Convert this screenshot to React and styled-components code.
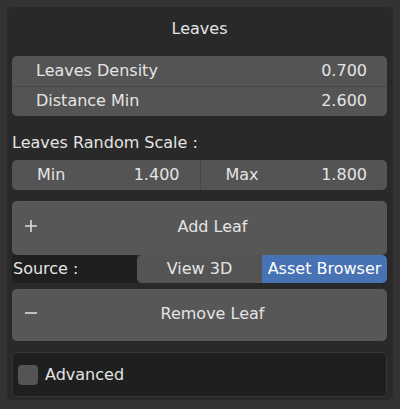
import React from "react";
import styled, { createGlobalStyle } from "styled-components";

const GlobalStyle = createGlobalStyle`
  html, body {
    margin: 0;
    padding: 0;
    background: #333333;
  }
  body {
    font-family: "DejaVu Sans", "Liberation Sans", sans-serif;
    color: #e4e4e4;
    font-size: 16px;
  }
`;

const Panel = styled.div`
  margin: 7px 0 0 7px;
  width: 386px;
  height: 393px;
  box-sizing: border-box;
  padding: 0 6px 0 5px;
  background: #292929;
  border-radius: 5px;
  display: flex;
  flex-direction: column;
`;

const Title = styled.div`
  height: 42px;
  display: flex;
  align-items: center;
  justify-content: center;
`;

const PropBox = styled.div`
  margin-top: 7px;
  background: #545454;
  border-radius: 5px;
  display: flex;
  flex-direction: column;
`;

const PropRow = styled.div`
  height: 30px;
  box-sizing: border-box;
  display: flex;
  align-items: center;
  justify-content: space-between;
  padding: 0 20px 2px 24px;
  & + & {
    border-top: 1px solid #474747;
  }
`;

const Label = styled.div`
  margin-top: 12px;
  height: 32px;
  box-sizing: border-box;
  padding-bottom: 3px;
  display: flex;
  align-items: center;
`;

const SplitRow = styled.div`
  height: 30px;
  display: grid;
  grid-template-columns: 1fr 1fr;
  background: #545454;
  border-radius: 5px;
`;

const SplitCell = styled.div`
  display: flex;
  align-items: center;
  justify-content: space-between;
  padding: 0 20px 2px 25px;
  & + & {
    border-left: 1px solid #474747;
  }
`;

const BigButton = styled.div`
  margin-top: ${(p) => p.$gap}px;
  height: ${(p) => p.$h}px;
  box-sizing: border-box;
  background: #575757;
  border-radius: 5px;
  position: relative;
  display: flex;
  align-items: center;
  justify-content: center;
  padding: 0 0 4px 26px;
`;

const ButtonIcon = styled.svg`
  position: absolute;
  left: 12px;
  top: calc(50% - 2px);
  transform: translateY(-50%);
`;

const SourceRow = styled.div`
  height: 28px;
  display: grid;
  grid-template-columns: 125px 125px 125px;
`;

const SourceLabel = styled.div`
  background: #1f1f1f;
  display: flex;
  align-items: center;
  padding: 0 0 2px 1px;
`;

const Toggle = styled.div`
  display: flex;
  align-items: center;
  justify-content: center;
  padding-bottom: 2px;
  background: ${(p) => (p.$active ? "#4772b3" : "#545454")};
  color: ${(p) => (p.$active ? "#ffffff" : "#e4e4e4")};
  border-radius: ${(p) => (p.$first ? "5px 0 0 5px" : "0 5px 5px 0")};
`;

const AdvancedBox = styled.div`
  margin-top: 11px;
  height: 45px;
  box-sizing: border-box;
  background: #1f1f1f;
  border: 1px solid #363636;
  border-radius: 5px;
  display: flex;
  align-items: center;
  gap: 7px;
  padding-left: 5px;
`;

const Checkbox = styled.div`
  width: 20px;
  height: 20px;
  border-radius: 4px;
  background: #545454;
`;

const PlusIcon = () => (
  <ButtonIcon width="14" height="14" viewBox="0 0 14 14">
    <path d="M7 1 V13 M1 7 H13" stroke="#dcdcdc" strokeWidth="1.6" fill="none" />
  </ButtonIcon>
);

const MinusIcon = () => (
  <ButtonIcon width="14" height="14" viewBox="0 0 14 14">
    <path d="M1 7 H13" stroke="#dcdcdc" strokeWidth="1.6" fill="none" />
  </ButtonIcon>
);

export default function App() {
  return (
    <>
      <GlobalStyle />
      <Panel>
        <Title>Leaves</Title>
        <PropBox>
          <PropRow>
            <span>Leaves Density</span>
            <span>0.700</span>
          </PropRow>
          <PropRow>
            <span>Distance Min</span>
            <span>2.600</span>
          </PropRow>
        </PropBox>
        <Label>Leaves Random Scale :</Label>
        <SplitRow>
          <SplitCell>
            <span>Min</span>
            <span>1.400</span>
          </SplitCell>
          <SplitCell>
            <span>Max</span>
            <span>1.800</span>
          </SplitCell>
        </SplitRow>
        <BigButton $gap={11} $h={54}>
          <PlusIcon />
          Add Leaf
        </BigButton>
        <SourceRow>
          <SourceLabel>Source :</SourceLabel>
          <Toggle $first>View 3D</Toggle>
          <Toggle $active>Asset Browser</Toggle>
        </SourceRow>
        <BigButton $gap={6} $h={52}>
          <MinusIcon />
          Remove Leaf
        </BigButton>
        <AdvancedBox>
          <Checkbox />
          Advanced
        </AdvancedBox>
      </Panel>
    </>
  );
}
